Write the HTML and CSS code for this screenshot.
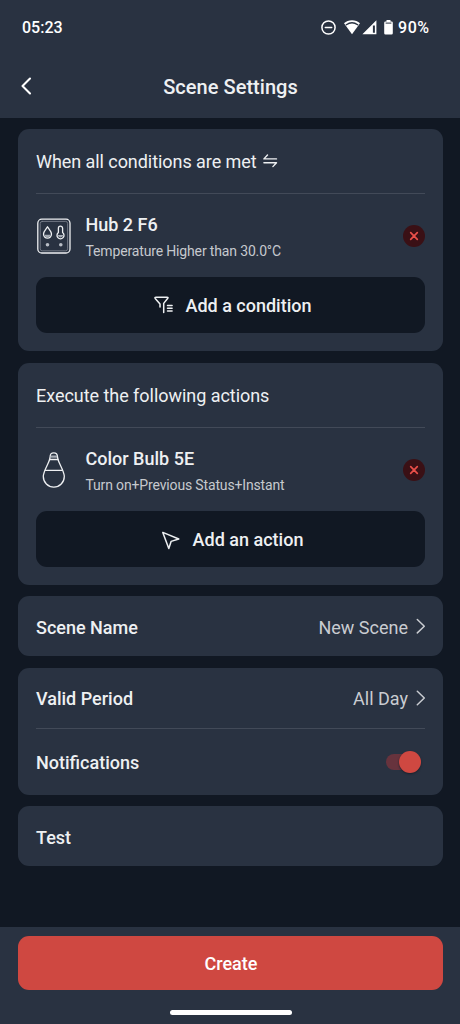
FILE: index.html
```html
<!DOCTYPE html>
<html lang="en">
<head>
<meta charset="utf-8">
<meta name="viewport" content="width=device-width, initial-scale=1">
<title>Scene Settings</title>
<link rel="stylesheet" href="styles.css">
</head>
<body>
<div class="screen">
  <header class="header">
    <div class="status">
      <span class="clock">05:23</span>
      <div class="indicators">
        <svg class="dnd" width="15" height="15" viewBox="0 0 15 15"><circle cx="7.5" cy="7.5" r="6.6"/><path d="M4.3 7.5h6.4"/></svg>
        <svg class="wifi" width="16" height="15" viewBox="0 0 16 15"><path class="solid" d="M8 .3C4.900.3 2.100 1.400 0 3.200L8 14.300l8-11.100C13.900 1.400 11.100.3 8 .3z"/><path class="gap" d="M2.300 4.700Q8 .7 13.700 4.700"/></svg>
        <svg class="signal" width="15" height="15" viewBox="0 0 15 15"><path class="solid" fill-rule="evenodd" d="M14.400.3V14.300H.4zM12.900 5.500h-2v7.300h2z"/></svg>
        <svg class="battery" width="9" height="15" viewBox="0 0 9 15"><path class="solid" d="M2.500 0h4v1.500h1q1.300 0 1.300 1.200v10.600q0 1.300-1.300 1.300h-6Q.2 14.600.2 13.300V2.700q0-1.200 1.300-1.200h1z"/><path class="gap thin" d="M2 3.100h5"/></svg>
        <span class="percent">90%</span>
      </div>
    </div>
    <div class="titlebar">
      <svg class="back" width="12" height="18" viewBox="0 0 12 18"><path d="M10 1.500 2.500 9l7.500 7.500"/></svg>
      <h1 class="title">Scene Settings</h1>
    </div>
  </header>

  <main class="content">
    <section class="card rule">
      <div class="rule-head"><span class="rule-title met">When all conditions are met</span>
        <svg class="swap" width="15" height="14" viewBox="0 0 15 14"><path d="M4.500 1 .9 4.900H13.500M.9 8.700h12.600L9.900 12.600"/></svg>
      </div>
      <div class="item">
        <svg class="device" width="36" height="36" viewBox="0 0 36 36">
          <rect class="strong" x="1.800" y="1.200" width="32.200" height="33.800" rx="4"/>
          <rect class="faint" x="4.200" y="3.400" width="27.400" height="29.400" rx="2"/>
          <path class="strong" d="M11.500 8.800c-1.400 2.300-4 4.600-4 7.300a4 4 0 0 0 8 0c0-2.700-2.600-5-4-7.300z"/>
          <path class="fill" d="M8.200 16.700h6.600q-.5 2.600-3.300 2.800-2.700-.2-3.300-2.800z"/>
          <path class="strong" d="M22.400 14.500V10.300a2.100 2.100 0 0 1 4.200 0v4.200a3.500 3.500 0 1 1-4.200 0z"/>
          <path class="fill" d="M21.700 17h5.600q-.4 2.400-2.800 2.500-2.300-.1-2.800-2.500z"/>
          <circle class="dot" cx="11.500" cy="26.700" r="1.800"/><circle class="dot" cx="24.800" cy="26.700" r="1.800"/>
        </svg>
        <div class="item-text"><div class="name hub">Hub 2 F6</div><div class="detail temperature">Temperature Higher than 30.0°C</div></div>
        <svg class="remove" width="22" height="22" viewBox="0 0 22 22"><circle cx="11" cy="11" r="11"/><path d="m7.700 7.700 6.600 6.600m0-6.600-6.600 6.600"/></svg>
      </div>
      <div class="add">
        <svg class="filter" width="20" height="18" viewBox="0 0 20 18"><path d="M6 11V8L1.200 2.400Q.5 1.200 2 1.200h11q1.700 0 .6 1.300L9.700 7.400V16.500M13.500 9.500h4.600M13.500 12.200h4.600M13.500 14.900h4.600"/></svg>
        <span class="add-label condition">Add a condition</span>
      </div>
    </section>

    <section class="card rule">
      <div class="rule-head"><span class="rule-title execute">Execute the following actions</span></div>
      <div class="item">
        <svg class="device" width="36" height="36" viewBox="0 0 36 36"><path class="strong" d="M14.300 4Q14.300.8 17.800.8T21.300 4l.7 3.500c1.300 4.800 6.300 11.500 6.300 17.100a10.500 10.500 0 0 1-21 0c0-5.600 5-12.300 6.300-17.100z"/><path class="fill" d="M14.600 3.500h6.400v2.200h-6.400z"/><path class="strong" d="M13.500 7.500h8.600M9.300 18.300h17"/></svg>
        <div class="item-text"><div class="name bulb">Color Bulb 5E</div><div class="detail status-detail">Turn on+Previous Status+Instant</div></div>
        <svg class="remove" width="22" height="22" viewBox="0 0 22 22"><circle cx="11" cy="11" r="11"/><path d="m7.700 7.700 6.600 6.600m0-6.600-6.600 6.600"/></svg>
      </div>
      <div class="add action">
        <svg class="pointer" width="20" height="19" viewBox="0 0 20 19"><path d="m1.800 1.400 16 6.600-7.700 2.400L7.800 17.500z"/></svg>
        <span class="add-label act">Add an action</span>
      </div>
    </section>

    <section class="card">
      <div class="setting"><span class="label">Scene Name</span><span class="value">New Scene</span><svg class="chevron" width="10" height="16" viewBox="0 0 10 16"><path d="m1.300 1.500 7 6.700-7 6.700"/></svg></div>
    </section>
    <section class="card">
      <div class="setting divided"><span class="label">Valid Period</span><span class="value">All Day</span><svg class="chevron" width="10" height="16" viewBox="0 0 10 16"><path d="m1.300 1.300 7 6.700-7 6.700"/></svg></div>
      <div class="setting last"><span class="label notifications">Notifications</span><span class="toggle"><span class="knob"></span></span></div>
    </section>
    <section class="card">
      <div class="setting"><span class="label">Test</span></div>
    </section>
  </main>

  <footer class="footer"><div class="create">Create</div><div class="home"></div></footer>
</div>
</body>
</html>
```
FILE: styles.css
```css
* { box-sizing: border-box; }
body { margin: 0; background: #111823; color: #eef0f2; font-family: Roboto, sans-serif; }
svg { display: block; flex: none; fill: none; stroke: #eef0f2; stroke-linecap: round; stroke-linejoin: round; }
.screen { width: 460px; height: 1024px; display: flex; flex-direction: column; overflow: hidden; }
.header { height: 118px; background: #293241; flex: none; }
.status { height: 55px; padding: 0 31px 0 22px; display: flex; align-items: center; justify-content: space-between; color: #fff; font: 500 16px/20px Roboto, sans-serif; }
.percent { letter-spacing: .5px; margin-right: -.5px; }
.indicators { display: flex; align-items: center; }
.indicators svg { stroke: #fff; }
.dnd { stroke-width: 1.5; margin-right: 8px; }
.signal { margin: 0 7px 0 2px; }
.battery { margin-right: 5px; }
.indicators .solid { fill: #fff; stroke: none; }
.indicators .gap { stroke: #293241; stroke-width: 1.4; }
.indicators .thin { stroke-width: 1; }
.titlebar { height: 63px; display: grid; grid-template-columns: 100px 1fr 100px; align-items: center; }
.back { margin: -1px 0 0 20px; stroke: #fff; stroke-width: 2.1; }
.title { margin: 1px 0 0 1px; font-size: 20px; line-height: 24px; font-weight: 500; letter-spacing: .04px; text-align: center; white-space: nowrap; }
.content { flex: 1; padding: 10.7px 17px 0 18px; display: flex; flex-direction: column; gap: 11.4px; }
.card { background: #293241; border-radius: 11px; padding: 0 18px; }
.rule { height: 222.5px; flex: none; }
.rule-head { height: 65.300px; display: flex; align-items: center; gap: 6px; border-bottom: 1px solid #424a58; padding-top: 2px; }
.rule-title { font-size: 18px; line-height: 24px; white-space: nowrap; }
.met { letter-spacing: -.06px; }
.execute { letter-spacing: -.04px; }
.swap { stroke-width: 1.4; margin-top: -1px; }
.item { height: 83.4px; display: flex; align-items: center; }
.device { margin-right: 13.500px; }
.device .strong { stroke-width: 1.3; }
.device .faint { stroke: #818893; stroke-width: .8; }
.device .fill { fill: #a5abb4; stroke: none; }
.device .dot { fill: #b8bdc5; stroke: none; }
.item-text { flex: 1; padding-top: 3px; white-space: nowrap; }
.name { font-size: 18px; line-height: 24px; font-weight: 500; }
.detail { margin-top: 4px; font-size: 14px; line-height: 20px; color: #c6c9ce; letter-spacing: -.15px; }
.remove { stroke: #e94f49; stroke-width: 1.7; }
.remove circle { fill: #3a1015; stroke: none; }
.add { height: 56px; background: #111823; border-radius: 11px; display: flex; align-items: center; justify-content: center; gap: 11px; padding: 2px 0 0 5px; }
.add svg { stroke-width: 1.5; }
.filter { margin-top: -2px; }
.action { gap: 12px; padding: 2px 0 0 3px; }
.add-label { font-size: 18px; line-height: 24px; font-weight: 500; }
.setting { height: 60px; display: flex; align-items: center; font-size: 18px; line-height: 24px; white-space: nowrap; }
.label { flex: 1; font-weight: 500; padding-top: 3px; }
.divided .label, .last .label { padding-top: 2px; }
.value { color: #c9ccd1; padding-top: 3px; }
.divided .value { padding-top: 2px; }
.chevron { margin: 0 -1px 0 8px; stroke: #c9ccd1; stroke-width: 1.5; }
.divided { height: 61px; border-bottom: 1px solid #424a58; }
.last { height: 66px; }
.toggle { width: 35px; height: 16px; margin-right: 4px; border-radius: 8px; background: #67333d; display: flex; align-items: center; justify-content: flex-end; }
.knob { width: 22px; height: 22px; flex: none; border-radius: 50%; background: #cf4841; box-shadow: 0 1px 2px #1a202b; }
.footer { height: 97px; flex: none; padding: 9px 17px 0 18px; background: #293241; display: flex; flex-direction: column; align-items: center; }
.create { align-self: stretch; height: 54px; border-radius: 11px; background: #cf4841; color: #fff; display: flex; align-items: center; justify-content: center; font-size: 18px; font-weight: 500; padding: 1px 0 0 1px; }
.home { width: 122px; height: 5px; margin-top: 20px; border-radius: 3px; background: #fff; }
```
